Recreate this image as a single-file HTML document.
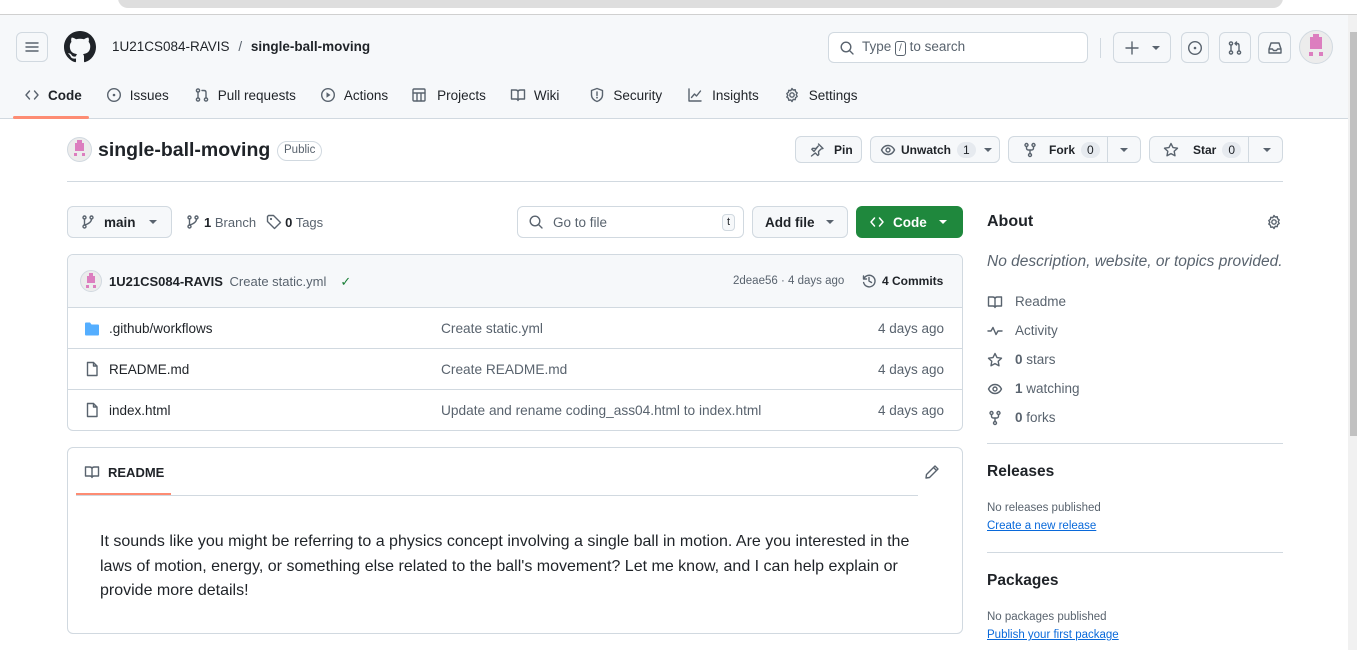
<!DOCTYPE html>
<html><head><meta charset="utf-8"><style>
*{box-sizing:border-box;margin:0;padding:0}
body{width:1357px;height:650px;overflow:hidden;background:#fff;font-family:"Liberation Sans",sans-serif;font-size:13px;color:#1f2328;position:relative}
.a{position:absolute;white-space:nowrap}
.btn{position:absolute;border:1px solid #d1d9e0;border-radius:6px;background:#f6f8fa}
.mid{display:flex;align-items:center}
svg{display:block}
.ic{fill:none;stroke:#59636e;stroke-width:1.4;stroke-linecap:round;stroke-linejoin:round}
.cnt{display:inline-block;background:#e6eaef;border-radius:10px;padding:1px 6px;font-size:12px;margin-left:6px}
.mut{color:#59636e}
.row{position:absolute;left:67px;width:896px;height:41px;border-top:1px solid #d1d9e0}
a{color:#0969da;text-decoration:underline}
</style></head><body>
<!-- browser chrome -->
<div class="a" style="left:118px;top:-12px;width:1165px;height:20px;background:#dedede;border-radius:10px"></div>
<div class="a" style="left:0;top:14px;width:1357px;height:1px;background:#d0d0d0"></div>
<!-- header -->
<div class="a" style="left:0;top:15px;width:1348px;height:104px;background:#f6f8fa;border-bottom:1px solid #d1d9e0"></div>
<div class="btn mid" style="left:16px;top:32px;width:32px;height:30px;justify-content:center"><svg width="16" height="16"><path class="ic" d="M2 4h12M2 8h12M2 12h12"/></svg></div>
<svg class="a" style="left:64px;top:31px" width="32" height="32" viewBox="0 0 16 16"><path fill="#1f2328" d="M8 0C3.58 0 0 3.580 0 8c0 3.54 2.290 6.530 5.470 7.590.4.07.55-.17.55-.38 0-.19-.01-.82-.01-1.49-2.010.37-2.530-.49-2.690-.94-.09-.23-.48-.94-.82-1.130-.28-.15-.68-.52-.01-.53.63-.01 1.080.58 1.230.82.72 1.210 1.870.87 2.330.66.07-.52.28-.87.51-1.070-1.780-.2-3.640-.89-3.640-3.950 0-.87.31-1.590.82-2.150-.08-.2-.36-1.020.08-2.120 0 0 .67-.21 2.200.82.64-.18 1.320-.27 2-.27.68 0 1.360.09 2 .27 1.530-1.040 2.200-.82 2.200-.82.44 1.100.16 1.920.08 2.120.51.56.82 1.270.82 2.150 0 3.070-1.870 3.750-3.650 3.950.29.25.54.73.54 1.480 0 1.070-.01 1.930-.01 2.200 0 .21.15.46.55.38A8.013 8.013 0 0016 8c0-4.420-3.580-8-8-8z"/></svg>
<div class="a" style="left:112px;top:39px;font-size:13.5px">1U21CS084-RAVIS <span class="mut" style="margin:0 5px">/</span> <b style="font-weight:600">single-ball-moving</b></div>
<div class="a mid" style="left:828px;top:32px;width:260px;height:31px;border:1px solid #d1d9e0;border-radius:6px;background:#fff;padding-left:10px">
<svg width="16" height="16"><circle class="ic" cx="7" cy="7" r="4.8"/><path class="ic" d="M10.5 10.5l3.5 3.5"/></svg>
<span class="mut" style="margin-left:7px;font-size:13.5px">Type <span style="display:inline-block;border:1px solid #59636e;border-radius:3px;font-size:10px;padding:0 3px;line-height:13px">/</span> to search</span></div>
<div class="a" style="left:1100px;top:38px;width:1px;height:20px;background:#d1d9e0"></div>
<div class="btn mid" style="left:1113px;top:32px;width:58px;height:31px;background:#f6f8fa;padding-left:10px"><svg width="16" height="16"><path class="ic" d="M8 2v12M2 8h12"/></svg><svg style="margin-left:12px" width="8" height="8"><path fill="#59636e" d="M0 2h8L4 6z"/></svg></div>
<div class="btn mid" style="left:1181px;top:32px;width:28px;height:31px;justify-content:center"><svg width="16" height="16"><circle class="ic" cx="8" cy="8" r="6.3"/><circle fill="#59636e" cx="8" cy="8" r="1.3"/></svg></div>
<div class="btn mid" style="left:1219px;top:32px;width:32px;height:31px;justify-content:center"><svg width="16" height="16"><circle class="ic" cx="4" cy="3.5" r="1.6"/><circle class="ic" cx="4" cy="12.5" r="1.6"/><circle class="ic" cx="12" cy="12.5" r="1.6"/><path class="ic" d="M4 5v6M12 11V5.5Q12 3.5 10 3.5H8M9.5 2l-1.5 1.5 1.5 1.5"/></svg></div>
<div class="btn mid" style="left:1258px;top:32px;width:33px;height:31px;justify-content:center"><svg width="16" height="16"><path class="ic" d="M2 9l2-6h8l2 6v4H2zM2 9h3.5l1 1.5h3L10.5 9H14"/></svg></div>
<div class="a" style="left:1299px;top:30px;width:34px;height:34px;border-radius:50%;background:#ececec;border:1px solid #d1d9e0"><div class="a" style="left:10px;top:6px;width:12px;height:12px;background:#dc7ebf"></div><div class="a" style="left:13px;top:3px;width:6px;height:4px;background:#dc7ebf"></div><div class="a" style="left:9px;top:21px;width:4px;height:4px;background:#dc7ebf"></div><div class="a" style="left:19px;top:21px;width:4px;height:4px;background:#dc7ebf"></div></div>
<!-- nav -->
<div class="a mid" style="left:24px;top:87px;font-size:13.5px;gap:0">
<svg width="16" height="16"><path class="ic" d="M5.5 4L2 8l3.5 4M10.5 4L14 8l-3.5 4"/></svg><span style="margin-left:8px;margin-right:24px;font-weight:600">Code</span>
<svg width="16" height="16"><circle class="ic" cx="8" cy="8" r="6.3"/><circle fill="#59636e" cx="8" cy="8" r="1.3"/></svg><span style="margin-left:8px;margin-right:25px">Issues</span>
<svg width="16" height="16"><circle class="ic" cx="4" cy="3.5" r="1.6"/><circle class="ic" cx="4" cy="12.5" r="1.6"/><circle class="ic" cx="12" cy="12.5" r="1.6"/><path class="ic" d="M4 5v6M12 11V5.5Q12 3.5 10 3.5H8"/></svg><span style="margin-left:8px;margin-right:24px">Pull requests</span>
<svg width="16" height="16"><circle class="ic" cx="8" cy="8" r="6.3"/><path fill="#59636e" d="M6.5 5.3v5.4L10.5 8z"/></svg><span style="margin-left:8px;margin-right:23px">Actions</span>
<svg width="16" height="16"><rect class="ic" x="2" y="2" width="12" height="12" rx="1"/><path class="ic" d="M2 6h12M6 6v8M10 6v8"/></svg><span style="margin-left:10px;margin-right:24px">Projects</span>
<svg width="16" height="16"><path class="ic" d="M1.5 3h4Q8 3 8 5v8.5Q8 12 6 12H1.5zM14.5 3h-4Q8 3 8 5M14.5 3v9H10Q8 12 8 13.5"/></svg><span style="margin-left:8px;margin-right:30px">Wiki</span>
<svg width="16" height="16"><path class="ic" d="M8 1.5l5.5 2v4.5c0 3-2.5 5.5-5.5 6.5C5 13.5 2.5 11 2.5 8V3.5zM8 5v3.5"/><circle fill="#59636e" cx="8" cy="10.7" r=".9"/></svg><span style="margin-left:8px;margin-right:25px">Security</span>
<svg width="16" height="16"><path class="ic" d="M2 2v12h12M4.5 10.5l3-3.5 2 2 4-5"/></svg><span style="margin-left:9px;margin-right:25px">Insights</span>
<svg width="16" height="16"><circle class="ic" cx="8" cy="8" r="2.2"/><path class="ic" d="M8 1.5l1.2 1.6 2-.4.4 2 1.6 1.2-1 1.8 1 1.8-1.6 1.2-.4 2-2-.4L8 14.5l-1.2-1.6-2 .4-.4-2-1.6-1.2 1-1.8-1-1.8 1.6-1.2.4-2 2 .4z"/></svg><span style="margin-left:9px">Settings</span>
</div>
<div class="a" style="left:13px;top:116px;width:76px;height:3px;background:#fd8c73;border-radius:2px"></div>
<!-- repo title -->
<div class="a" style="left:67px;top:137px;width:25px;height:25px;border-radius:50%;background:#ececec;border:1px solid #d1d9e0"><div class="a" style="left:7px;top:5px;width:9px;height:8px;background:#dc7ebf"></div><div class="a" style="left:9px;top:2px;width:5px;height:3px;background:#dc7ebf"></div><div class="a" style="left:6px;top:15px;width:3px;height:3px;background:#dc7ebf"></div><div class="a" style="left:14px;top:15px;width:3px;height:3px;background:#dc7ebf"></div></div>
<div class="a" style="left:98px;top:139px;font-size:19.5px;font-weight:600">single-ball-moving</div>
<div class="a" style="left:277px;top:141px;height:20px;border:1px solid #d1d9e0;border-radius:10px;font-size:11.5px;padding:2px 6px;color:#59636e">Public</div>
<div class="btn mid" style="left:795px;top:136px;width:67px;height:27px;padding-left:13px;font-size:12px;font-weight:600"><svg width="16" height="16"><path class="ic" d="M9.5 2l4.5 4.5-2 .5-2.5 2.5.3 3-1 1-2.5-2.5L2.5 14M5 9.5L2.8 7.3l1-1 3 .3L9.3 4z"/></svg><span style="margin-left:9px">Pin</span></div>
<div class="btn mid" style="left:870px;top:136px;width:130px;height:27px;padding-left:9px;font-size:12px;font-weight:600"><svg width="16" height="16"><path class="ic" d="M1.5 8C3 5 5.3 3.5 8 3.5S13 5 14.5 8C13 11 10.7 12.5 8 12.5S3 11 1.5 8z"/><circle class="ic" cx="8" cy="8" r="2"/></svg><span style="margin-left:5px">Unwatch</span><span class="cnt" style="font-weight:400">1</span><svg style="margin-left:8px" width="8" height="8"><path fill="#59636e" d="M0 2h8L4 6z"/></svg></div>
<div class="btn mid" style="left:1008px;top:136px;width:133px;height:27px;padding-left:13px;font-size:12px;font-weight:600"><svg width="16" height="16"><circle class="ic" cx="4.5" cy="3" r="1.5"/><circle class="ic" cx="11.5" cy="3" r="1.5"/><circle class="ic" cx="8" cy="13" r="1.5"/><path class="ic" d="M4.5 4.5v1.5Q4.5 8 6.5 8h3Q11.5 8 11.5 6V4.5M8 8v3.5"/></svg><span style="margin-left:11px">Fork</span><span class="cnt" style="font-weight:400">0</span><div class="a" style="left:98px;top:0;width:1px;height:25px;background:#d1d9e0"></div><svg class="a" style="left:111px;top:9px" width="8" height="8"><path fill="#59636e" d="M0 2h8L4 6z"/></svg></div>
<div class="btn mid" style="left:1149px;top:136px;width:134px;height:27px;padding-left:13px;font-size:12px;font-weight:600"><svg width="16" height="16"><path class="ic" d="M8 1.5l2 4.1 4.5.6-3.3 3.1.8 4.5L8 11.6l-4 2.2.8-4.5L1.5 6.2 6 5.6z"/></svg><span style="margin-left:14px">Star</span><span class="cnt" style="font-weight:400">0</span><div class="a" style="left:98px;top:0;width:1px;height:25px;background:#d1d9e0"></div><svg class="a" style="left:113px;top:9px" width="8" height="8"><path fill="#59636e" d="M0 2h8L4 6z"/></svg></div>
<div class="a" style="left:67px;top:181px;width:1216px;height:1px;background:#d1d9e0"></div>
<!-- branch row -->
<div class="btn mid" style="left:67px;top:206px;width:105px;height:32px;padding-left:12px;font-size:13.5px;font-weight:600"><svg width="16" height="16"><circle class="ic" cx="4.5" cy="3.5" r="1.5"/><circle class="ic" cx="11.5" cy="3.5" r="1.5"/><circle class="ic" cx="4.5" cy="12.5" r="1.5"/><path class="ic" d="M4.5 5v6M11.5 5q0 4-7 6"/></svg><span style="margin-left:8px">main</span><svg style="margin-left:13px" width="8" height="8"><path fill="#59636e" d="M0 2h8L4 6z"/></svg></div>
<div class="a mid" style="left:185px;top:214px;font-size:13px"><svg width="16" height="16"><circle class="ic" cx="4.5" cy="3.5" r="1.5"/><circle class="ic" cx="11.5" cy="3.5" r="1.5"/><circle class="ic" cx="4.5" cy="12.5" r="1.5"/><path class="ic" d="M4.5 5v6M11.5 5q0 4-7 6"/></svg><span style="margin-left:3px"><b>1</b> <span class="mut">Branch</span></span><svg style="margin-left:10px" width="16" height="16"><path class="ic" d="M1.5 2.5v5l7 7 6-6-7-7h-5z"/><circle fill="#59636e" cx="5" cy="5" r="1.1"/></svg><span style="margin-left:3px"><b>0</b> <span class="mut">Tags</span></span></div>
<div class="a mid" style="left:517px;top:206px;width:227px;height:32px;border:1px solid #d1d9e0;border-radius:6px;padding-left:10px"><svg width="16" height="16"><circle class="ic" cx="7" cy="7" r="4.8"/><path class="ic" d="M10.5 10.5l3.5 3.5"/></svg><span class="mut" style="margin-left:9px;font-size:13.5px">Go to file</span><span class="a" style="left:204px;top:7px;border:1px solid #d1d9e0;border-radius:4px;font-size:11px;padding:0 4px;line-height:15px;background:#f6f8fa">t</span></div>
<div class="btn mid" style="left:752px;top:206px;width:96px;height:32px;padding-left:12px;font-size:13.5px;font-weight:600"><span>Add file</span><svg style="margin-left:11px" width="8" height="8"><path fill="#59636e" d="M0 2h8L4 6z"/></svg></div>
<div class="a mid" style="left:856px;top:206px;width:107px;height:32px;border-radius:6px;background:#1f883d;color:#fff;padding-left:13px;font-size:13.5px;font-weight:600"><svg width="16" height="16"><path fill="none" stroke="#fff" stroke-width="1.5" stroke-linecap="round" stroke-linejoin="round" d="M5.5 4L2 8l3.5 4M10.5 4L14 8l-3.5 4"/></svg><span style="margin-left:8px">Code</span><svg style="margin-left:12px" width="8" height="8"><path fill="#fff" d="M0 2h8L4 6z"/></svg></div>
<!-- table -->
<div class="a" style="left:67px;top:254px;width:896px;height:177px;border:1px solid #d1d9e0;border-radius:6px;overflow:hidden">
<div class="a" style="left:0;top:0;width:896px;height:53px;background:#f6f8fa"></div></div>
<div class="a" style="left:80px;top:270px;width:22px;height:22px;border-radius:50%;background:#ececec;border:1px solid #d1d9e0"><div class="a" style="left:6px;top:5px;width:8px;height:7px;background:#dc7ebf"></div><div class="a" style="left:8px;top:2px;width:4px;height:3px;background:#dc7ebf"></div><div class="a" style="left:5px;top:14px;width:3px;height:3px;background:#dc7ebf"></div><div class="a" style="left:12px;top:14px;width:3px;height:3px;background:#dc7ebf"></div></div>
<div class="a" style="left:109px;top:274px;font-size:13px"><b style="font-weight:600">1U21CS084-RAVIS</b> <span class="mut" style="margin-left:3px">Create static.yml</span><span style="color:#1a7f37;margin-left:14px">✓</span></div>
<div class="a mut" style="left:733px;top:275px;font-size:11.5px">2deae56 · 4 days ago</div>
<div class="a mid" style="left:861px;top:273px;font-size:12px;font-weight:600"><svg width="16" height="16"><path class="ic" d="M2.5 3v3h3M2.8 6A5.8 5.8 0 1 1 2.6 9.5M8 4.5V8l2.5 1.5"/></svg><span style="margin-left:5px">4 Commits</span></div>
<div class="row" style="top:307px"></div><div class="row" style="top:348px"></div><div class="row" style="top:389px"></div>
<svg class="a" style="left:84px;top:321px" width="16" height="16"><path fill="#54aeff" d="M1 2.5Q1 1.5 2 1.5h4l1.5 2H14q1 0 1 1v9q0 1-1 1H2q-1 0-1-1z"/></svg>
<svg class="a" style="left:84px;top:361px" width="16" height="16"><path class="ic" d="M3.5 1.5h6l3.5 3.5v9.5h-9.5zM9.5 1.5v3.5h3.5"/></svg>
<svg class="a" style="left:84px;top:402px" width="16" height="16"><path class="ic" d="M3.5 1.5h6l3.5 3.5v9.5h-9.5zM9.5 1.5v3.5h3.5"/></svg>
<div class="a" style="left:109px;top:321px;font-size:13.5px">.github/workflows</div>
<div class="a" style="left:109px;top:362px;font-size:13.5px">README.md</div>
<div class="a" style="left:109px;top:403px;font-size:13.5px">index.html</div>
<div class="a mut" style="left:441px;top:321px;font-size:13.7px">Create static.yml</div>
<div class="a mut" style="left:441px;top:362px;font-size:13.7px">Create README.md</div>
<div class="a mut" style="left:441px;top:403px;font-size:13.7px">Update and rename coding_ass04.html to index.html</div>
<div class="a mut" style="left:878px;top:321px;font-size:13.5px">4 days ago</div>
<div class="a mut" style="left:878px;top:362px;font-size:13.5px">4 days ago</div>
<div class="a mut" style="left:878px;top:403px;font-size:13.5px">4 days ago</div>
<!-- readme -->
<div class="a" style="left:67px;top:447px;width:896px;height:187px;border:1px solid #d1d9e0;border-radius:6px"></div>
<div class="a" style="left:76px;top:495px;width:842px;height:1px;background:#d1d9e0"></div>
<div class="a" style="left:76px;top:493px;width:95px;height:2px;background:#fd8c73"></div>
<div class="a mid" style="left:84px;top:464px;font-size:13px;font-weight:600"><svg width="16" height="16"><path class="ic" d="M1.5 3h4Q8 3 8 5v8.5Q8 12 6 12H1.5zM14.5 3h-4Q8 3 8 5M14.5 3v9H10Q8 12 8 13.5"/></svg><span style="margin-left:8px">README</span></div>
<svg class="a" style="left:924px;top:464px" width="16" height="16"><path class="ic" d="M11 2l3 3-8.5 8.5-3.5.5.5-3.5zM9.5 3.5l3 3"/></svg>
<div class="a" style="left:100px;top:530px;font-size:16px;line-height:24.5px">It sounds like you might be referring to a physics concept involving a single ball in motion. Are you interested in the<br>laws of motion, energy, or something else related to the ball's movement? Let me know, and I can help explain or<br>provide more details!</div>
<!-- sidebar -->
<div class="a" style="left:987px;top:213px;font-size:16px;font-weight:600">About</div>
<svg class="a" style="left:1266px;top:214px" width="16" height="16"><circle class="ic" cx="8" cy="8" r="2.2"/><path class="ic" d="M8 1.5l1.2 1.6 2-.4.4 2 1.6 1.2-1 1.8 1 1.8-1.6 1.2-.4 2-2-.4L8 14.5l-1.2-1.6-2 .4-.4-2-1.6-1.2 1-1.8-1-1.8 1.6-1.2.4-2 2 .4z"/></svg>
<div class="a mut" style="left:987px;top:253px;font-size:15.5px;font-style:italic">No description, website, or topics provided.</div>
<div class="a mut" style="left:987px;top:287px;font-size:13.5px;line-height:29px">
<div class="mid"><svg width="16" height="16"><path class="ic" d="M1.5 3h4Q8 3 8 5v8.5Q8 12 6 12H1.5zM14.5 3h-4Q8 3 8 5M14.5 3v9H10Q8 12 8 13.5"/></svg><span style="margin-left:12px">Readme</span></div>
<div class="mid"><svg width="16" height="16"><path class="ic" d="M1 8h3l2-3.5 3 7 2-3.5h4"/></svg><span style="margin-left:12px">Activity</span></div>
<div class="mid"><svg width="16" height="16"><path class="ic" d="M8 1.5l2 4.1 4.5.6-3.3 3.1.8 4.5L8 11.6l-4 2.2.8-4.5L1.5 6.2 6 5.6z"/></svg><span style="margin-left:12px"><b style="color:#59636e">0</b> stars</span></div>
<div class="mid"><svg width="16" height="16"><path class="ic" d="M1.5 8C3 5 5.3 3.5 8 3.5S13 5 14.5 8C13 11 10.7 12.5 8 12.5S3 11 1.5 8z"/><circle class="ic" cx="8" cy="8" r="2"/></svg><span style="margin-left:12px"><b>1</b> watching</span></div>
<div class="mid"><svg width="16" height="16"><circle class="ic" cx="4.5" cy="3" r="1.5"/><circle class="ic" cx="11.5" cy="3" r="1.5"/><circle class="ic" cx="8" cy="13" r="1.5"/><path class="ic" d="M4.5 4.5v1.5Q4.5 8 6.5 8h3Q11.5 8 11.5 6V4.5M8 8v3.5"/></svg><span style="margin-left:12px"><b>0</b> forks</span></div>
</div>
<div class="a" style="left:987px;top:443px;width:296px;height:1px;background:#d1d9e0"></div>
<div class="a" style="left:987px;top:463px;font-size:15.5px;font-weight:600">Releases</div>
<div class="a mut" style="left:987px;top:502px;font-size:11.5px">No releases published</div>
<div class="a" style="left:987px;top:520px;font-size:11.5px"><a>Create a new release</a></div>
<div class="a" style="left:987px;top:552px;width:296px;height:1px;background:#d1d9e0"></div>
<div class="a" style="left:987px;top:572px;font-size:15.5px;font-weight:600">Packages</div>
<div class="a mut" style="left:987px;top:611px;font-size:11.5px">No packages published</div>
<div class="a" style="left:987px;top:629px;font-size:11.5px"><a>Publish your first package</a></div>
<!-- scrollbar -->
<div class="a" style="left:1348px;top:15px;width:9px;height:635px;background:#f1f1f1"></div>
<div class="a" style="left:1350px;top:32px;width:7px;height:404px;background:#c1c1c1"></div>
</body></html>
